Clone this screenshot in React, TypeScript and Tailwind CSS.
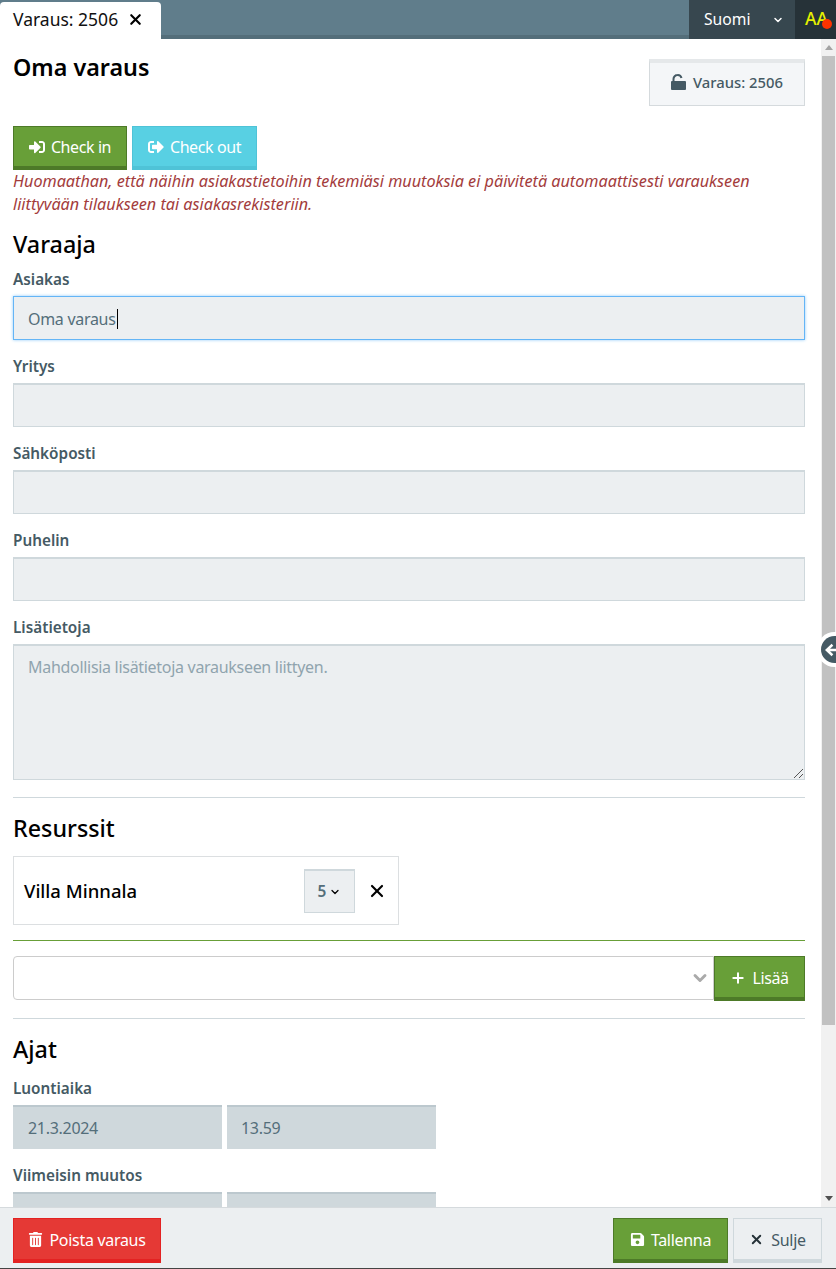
import React from "react";
import { ChevronDown, X, Plus } from "lucide-react";
import { FaSave, FaSignInAlt, FaSignOutAlt, FaTrashAlt } from "react-icons/fa";

const Field = ({ label, value }: { label: string; value?: string }) => (
  <div className="mb-[16px]">
    <label className="block h-[27px] text-[15.3px] leading-[20px] font-semibold text-[#455a64]">{label}</label>
    <div className="h-[44px] border border-[#cfd8dc] border-t-2 bg-[#eceff1] px-[14px] text-[16px] leading-[41px] tracking-[-0.3px] text-[#546e7a]">
      {value}
    </div>
  </div>
);

const SectionTitle = ({ children }: { children: React.ReactNode }) => (
  <h2 className="text-[23.3px] leading-[30px] font-medium text-black">{children}</h2>
);

const TimeRow = ({ label, date, time }: { label: string; date?: string; time?: string }) => (
  <div className="mb-[16px]">
    <label className="block h-[27px] text-[15.3px] leading-[20px] font-semibold text-[#455a64]">{label}</label>
    <div className="flex gap-[5px]">
      <div className="h-[44px] w-[209px] border-t-2 border-[#bcc8ce] bg-[#cfd8dc] px-[15px] text-[16px] leading-[42px] tracking-[-0.3px] text-[#546e7a]">{date}</div>
      <div className="h-[44px] w-[209px] border-t-2 border-[#bcc8ce] bg-[#cfd8dc] px-[14px] text-[16px] leading-[42px] tracking-[-0.3px] text-[#546e7a]">{time}</div>
    </div>
  </div>
);

export default function App() {
  return (
    <div className="relative flex h-[1269px] w-[836px] flex-col overflow-hidden bg-white font-['Noto_Sans',sans-serif]">
      {/* Top bar */}
      <div className="flex h-[39px] shrink-0 items-stretch border-b-4 border-[#546e7a] bg-[#607d8b]">
        <div className="-mb-[4px] mt-[2px] flex w-[161px] items-center rounded-t-[4px] bg-white pl-[13px] pb-[3px] text-[17.5px] text-[#111]">
          <span>Varaus: 2506</span>
          <X className="ml-[9px] h-[17px] w-[17px] text-black" strokeWidth={3} />
        </div>
        <div className="flex-1" />
        <div className="-mb-[4px] flex w-[106px] items-center justify-between bg-[#37474f] pl-[15px] pr-[11px] text-[15.7px] text-white">
          <span>Suomi</span>
          <ChevronDown className="h-[12px] w-[12px]" strokeWidth={3} />
        </div>
        <div className="relative -mb-[4px] w-[41px] bg-[#263238] pl-[10px] pt-[6px] text-[17.5px] leading-[24px] font-medium text-[#e6f000]">
          AA
          <span className="absolute left-[27px] top-[19px] h-[10px] w-[10px] rounded-full bg-[#ff3300]" />
        </div>
      </div>

      {/* Middle */}
      <div className="flex min-h-0 flex-1">
        <div className="min-w-0 flex-1 overflow-hidden pl-[13px] pr-[16px]">
          <div className="flex h-[87px] items-start justify-between">
            <h1 className="pt-[13px] text-[23.3px] leading-[30px] font-semibold text-black">Oma varaus</h1>
            <div className="mt-[20px] flex h-[47px] w-[156px] items-center justify-center gap-[7px] border border-t-4 border-[#d5dadd] border-t-[#e5e8ea] bg-[#f4f6f8] pb-[4px] text-[14.8px] font-medium text-[#455a64]">
              <svg className="h-[16px] w-[15px]" viewBox="0 0 15 16" fill="currentColor">
                <path d="M1 7h13a1 1 0 0 1 1 1v7a1 1 0 0 1-1 1H1a1 1 0 0 1-1-1V8a1 1 0 0 1 1-1z" />
                <path d="M2.500 8V5a4 4 0 0 1 4-4 4 4 0 0 1 4 3" fill="none" stroke="currentColor" strokeWidth="2" />
              </svg>
              <span>Varaus: 2506</span>
            </div>
          </div>

          <div className="flex gap-[5px]">
            <button className="flex h-[44px] w-[114px] items-center justify-center gap-[6px] border border-b-4 border-[#4d7a28] bg-[#689f38] pt-[1px] text-[16px] tracking-[-0.4px] text-white">
              <FaSignInAlt className="h-[16px] w-[16px]" />
              Check in
            </button>
            <button className="flex h-[44px] w-[125px] items-center justify-center gap-[6px] border border-b-4 border-[#4fc3d7] bg-[#58d0e3] pt-[1px] text-[16px] tracking-[-0.4px] text-white">
              <FaSignOutAlt className="h-[16px] w-[16px]" />
              Check out
            </button>
          </div>
          <p className="text-[16.2px] leading-[23px] italic text-[#a33c3c]">
            Huomaathan, että näihin asiakastietoihin tekemiäsi muutoksia ei päivitetä automaattisesti varaukseen liittyvään tilaukseen tai asiakasrekisteriin.
          </p>

          <div className="mt-[13px] mb-[10px]"><SectionTitle>Varaaja</SectionTitle></div>
          <div className="mb-[16px]">
            <label className="block h-[27px] text-[15.3px] leading-[20px] font-semibold text-[#455a64]">Asiakas</label>
            <div className="flex h-[44px] items-center border border-[#64b5f6] bg-[#eceff1] px-[14px] pt-[1px] text-[16px] tracking-[-0.3px] text-[#546e7a] shadow-[0_0_3px_#90caf9]">
              Oma varaus<span className="ml-[1px] h-[20px] w-px bg-black" />
            </div>
          </div>
          <Field label="Yritys" />
          <Field label="Sähköposti" />
          <Field label="Puhelin" />
          <div>
            <label className="block h-[27px] text-[15.3px] leading-[20px] font-semibold text-[#455a64]">Lisätietoja</label>
            <div className="relative h-[136px] border border-[#cfd8dc] border-t-2 bg-[#eceff1] px-[14px] pt-[9px] text-[16px] leading-[24px] tracking-[-0.3px] text-[#90a4ae]">
              Mahdollisia lisätietoja varaukseen liittyen.
              <svg className="absolute bottom-[1px] right-[1px] h-[9px] w-[9px] text-[#555]" viewBox="0 0 9 9" fill="none" stroke="currentColor" strokeWidth="1">
                <path d="M0 9L9 0M5 9L9 5" />
              </svg>
            </div>
          </div>

          <hr className="mt-[17px] border-t border-[#cfd8dc]" />
          <div className="mt-[15px] mb-[13px]"><SectionTitle>Resurssit</SectionTitle></div>

          <div className="flex h-[69px] w-[386px] items-center border border-[#dcdfe1] pl-[10px]">
            <span className="flex-1 pt-[1px] text-[18.5px] font-medium text-black">Villa Minnala</span>
            <div className="flex h-[44px] w-[51px] items-center justify-center gap-[3px] border border-t-2 border-[#cfd8dc] bg-[#eceff1] pt-[1px] text-[15.4px] font-semibold text-[#546e7a]">
              5 <ChevronDown className="h-[12px] w-[12px] text-black" strokeWidth={2.5} />
            </div>
            <X className="ml-[12px] mr-[11px] h-[20px] w-[20px] text-black" strokeWidth={2.6} />
          </div>

          <div className="mt-[15px] h-px bg-[#689f38]" />
          <div className="mt-[15px] flex">
            <div className="flex h-[44px] flex-1 items-center justify-end rounded-l-[4px] border border-[#ccc] pr-[3px]">
              <ChevronDown className="h-[20px] w-[20px] text-[#aaa]" strokeWidth={3.5} />
            </div>
            <button className="flex h-[45px] w-[91px] items-center justify-center gap-[6px] border border-b-4 border-[#4d7a28] bg-[#689f38] pt-[1px] text-[16px] tracking-[-0.4px] text-white">
              <Plus className="h-[16px] w-[16px]" strokeWidth={3} />
              Lisää
            </button>
          </div>
          <hr className="mt-[17px] border-t border-[#cfd8dc]" />
          <div className="mt-[15px] mb-[14px]"><SectionTitle>Ajat</SectionTitle></div>
          <TimeRow label="Luontiaika" date="21.3.2024" time="13.59" />
          <TimeRow label="Viimeisin muutos" />
        </div>

        {/* Scrollbar */}
        <div className="flex w-[15px] shrink-0 flex-col items-center bg-[#f1f1f1]">
          <div className="mt-[6px] h-0 w-0 border-x-[4px] border-b-[5px] border-x-transparent border-b-[#a3a3a3]" />
          <div className="mt-[6px] h-[969px] w-[13px] bg-[#c1c1c1]" />
          <div className="mt-auto mb-[6px] h-0 w-0 border-x-[4px] border-t-[5px] border-x-transparent border-t-[#505050]" />
        </div>
      </div>

      {/* Round arrow over the scrollbar */}
      <div className="absolute left-[821px] top-[636px] flex h-[27px] w-[27px] items-center rounded-full bg-[#455a64] pl-[4px] shadow-[0_0_0_4px_#fff]">
        <svg className="h-[14px] w-[14px]" viewBox="0 0 16 16" fill="none" stroke="#fff" strokeWidth="2.8">
          <path d="M16 8H2M8.500 2L2 8l6.500 6" />
        </svg>
      </div>

      {/* Footer */}
      <div className="flex h-[62px] shrink-0 items-start justify-between border-t border-[#d5dadd] border-b border-b-[#444] bg-[#eceff1] pl-[13px] pr-[14px] pt-[10px]">
        <button className="flex h-[45px] w-[148px] items-center justify-center gap-[6px] border border-b-4 border-[#e32222] bg-[#e53935] pt-[1px] text-[16px] tracking-[-0.3px] text-white">
          <FaTrashAlt className="h-[15px] w-[15px]" />
          Poista varaus
        </button>
        <div className="flex gap-[5px]">
          <button className="flex h-[45px] w-[115px] items-center justify-center gap-[6px] border border-b-4 border-[#4d7a28] bg-[#689f38] pt-[1px] text-[16px] tracking-[-0.3px] text-white">
            <FaSave className="h-[15px] w-[15px]" />
            Tallenna
          </button>
          <button className="flex h-[45px] w-[89px] items-center justify-center gap-[7px] border border-b-4 border-[#cfd8dc] bg-[#eceff1] pt-[1px] text-[16px] tracking-[-0.3px] text-[#455a64]">
            <X className="h-[15px] w-[15px] text-[#263238]" strokeWidth={3} />
            Sulje
          </button>
        </div>
      </div>
    </div>
  );
}
